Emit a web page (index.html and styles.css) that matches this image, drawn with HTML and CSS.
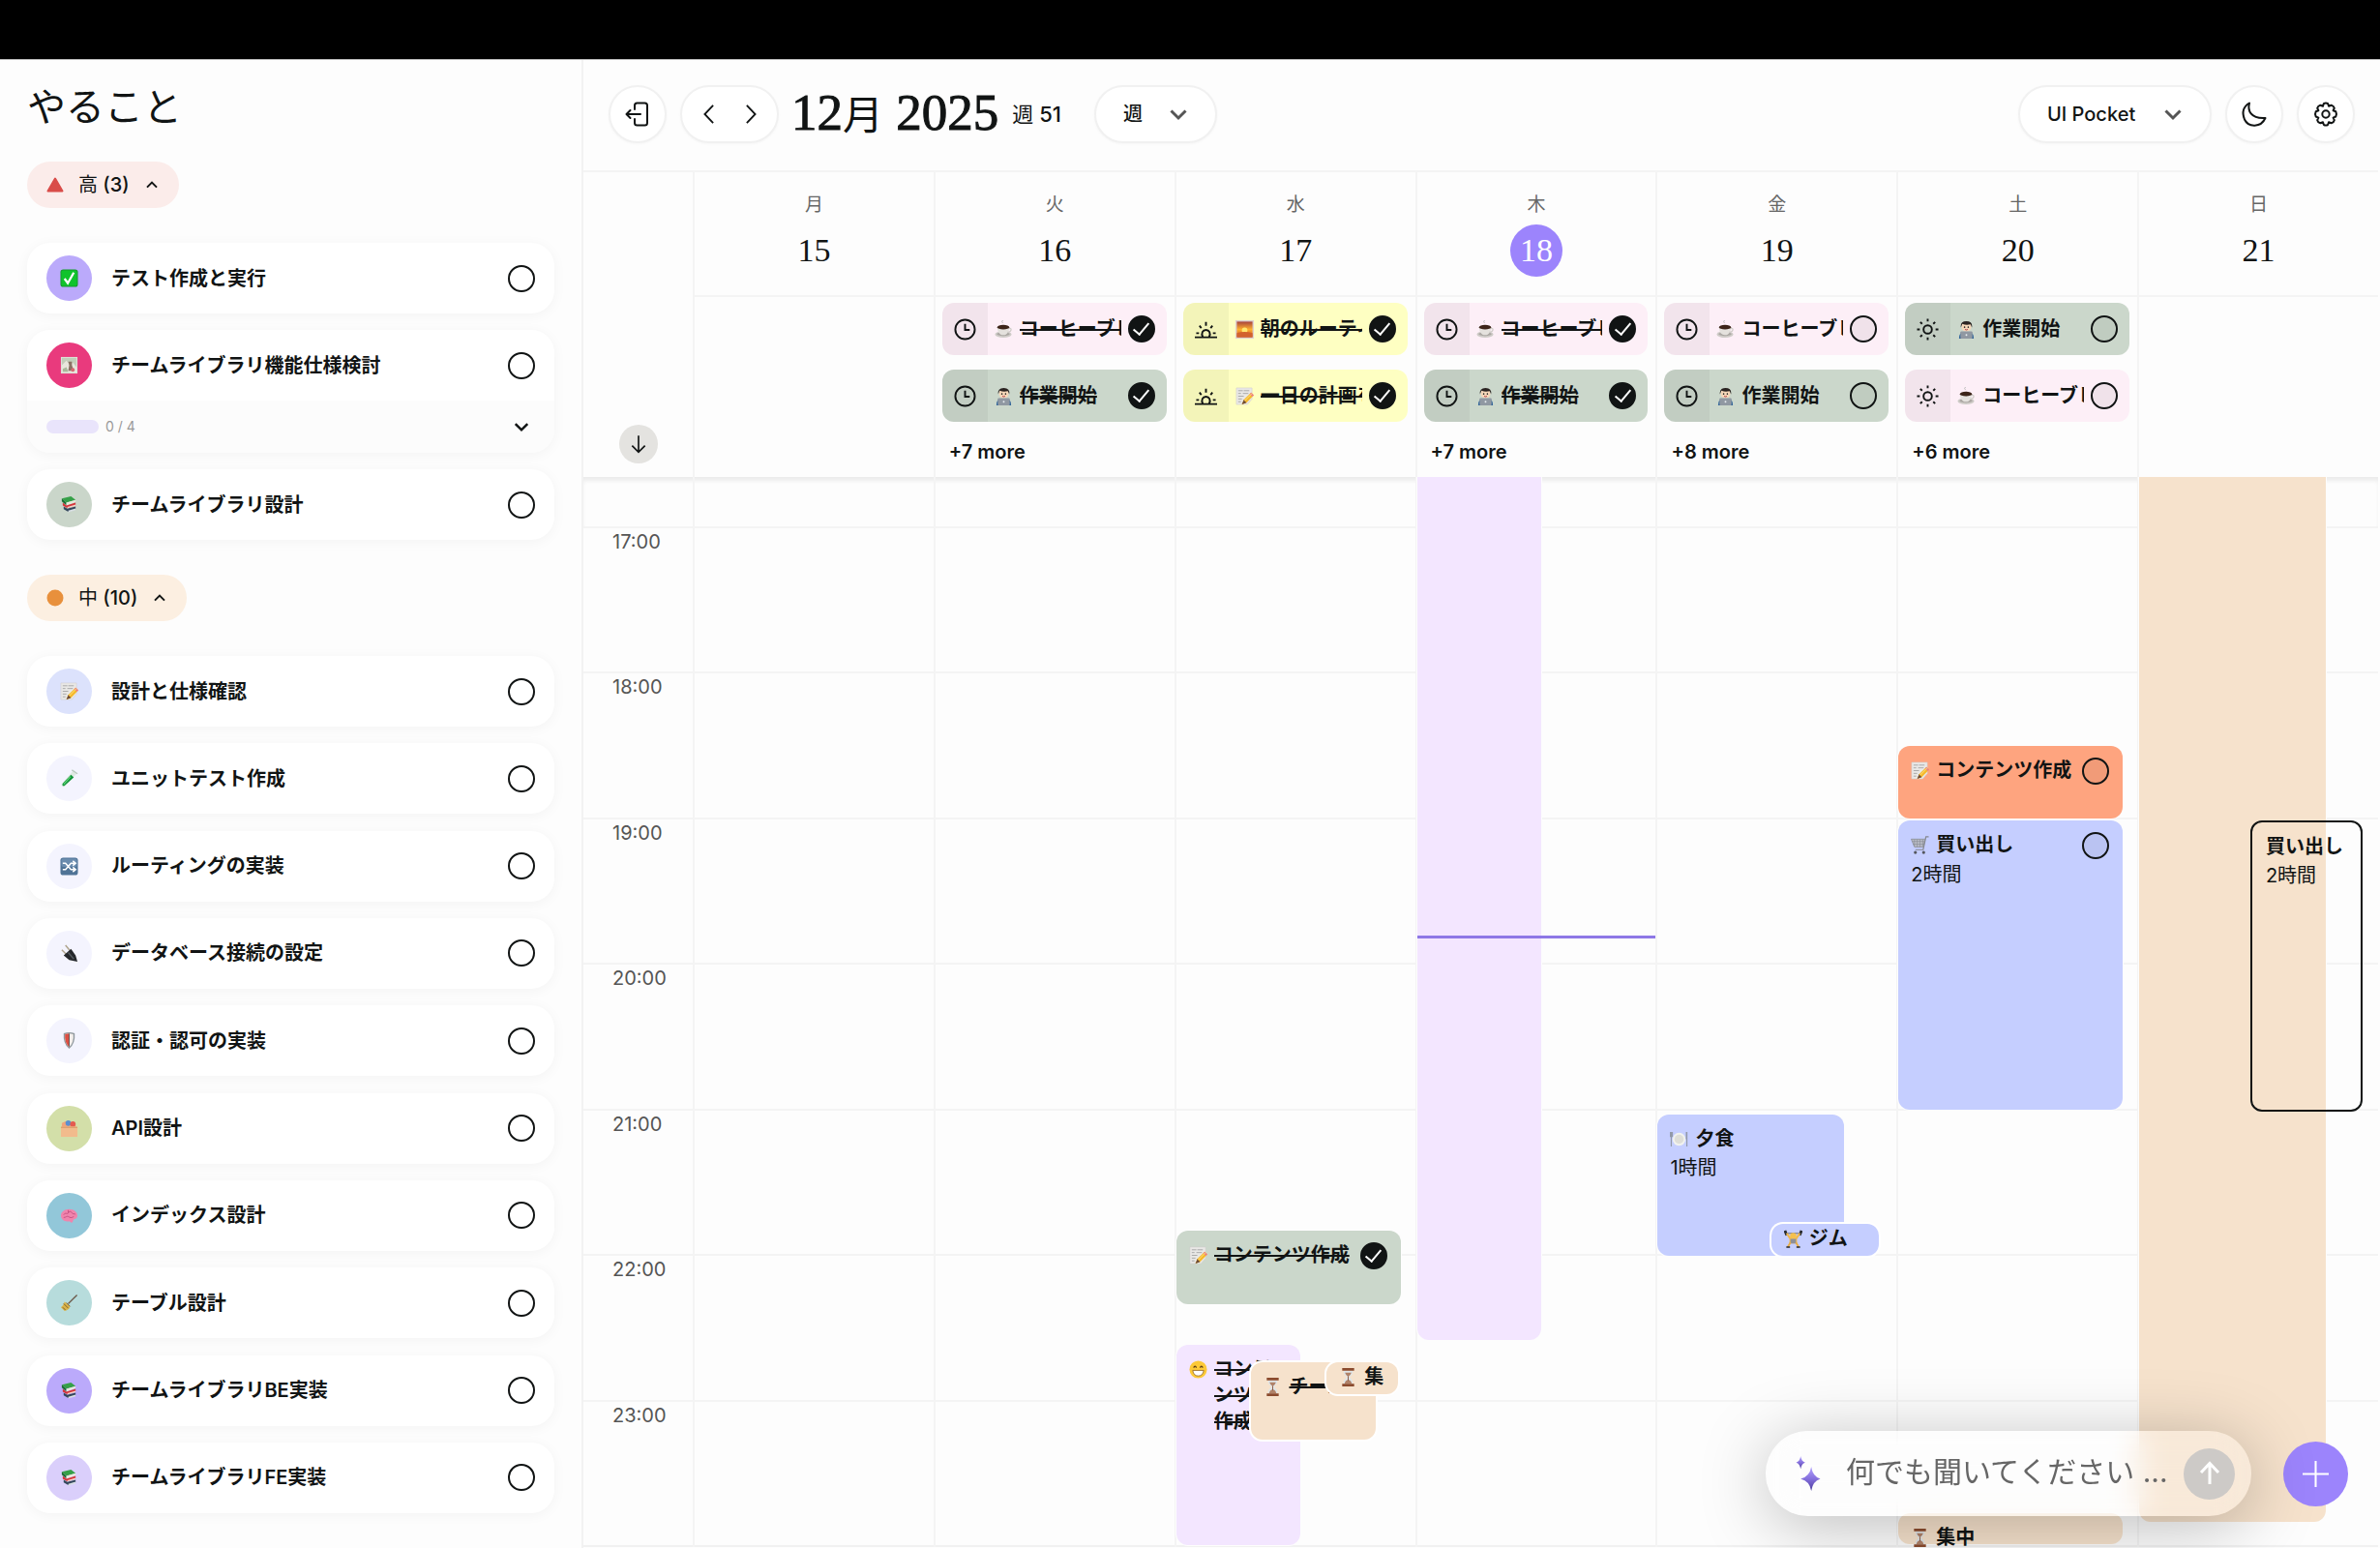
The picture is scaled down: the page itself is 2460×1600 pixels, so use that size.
FILE: index.html
```html
<!DOCTYPE html>
<html lang="ja">
<head>
<meta charset="utf-8">
<title>やること</title>
<link rel="stylesheet" href="styles.css">
</head>
<body>
<svg class="sprite" aria-hidden="true">
  <defs>
    <linearGradient id="sunset" x1="0" y1="0" x2="0" y2="1"><stop offset="0" stop-color="#a8433c"/><stop offset=".5" stop-color="#ffb02e"/><stop offset="1" stop-color="#c8502a"/></linearGradient>
    <linearGradient id="spark" x1="0" y1="0" x2="0" y2="1"><stop offset="0" stop-color="#b3a2ff"/><stop offset=".5" stop-color="#8570dd"/><stop offset="1" stop-color="#4b3b9c"/></linearGradient>
  </defs>
  <symbol id="e-check" viewBox="0 0 20 20"><rect x=".5" y=".5" width="19" height="19" rx="3" fill="#159a2b"/><rect x="1.5" y="1.5" width="17" height="17" rx="2" fill="#10c32c"/><path d="M5 10.500l3.500 5L15 4" fill="none" stroke="#fff" stroke-width="2.400"/></symbol>
  <symbol id="e-picture" viewBox="0 0 20 20"><rect x="1" y="1" width="18" height="18" fill="#dfe3d8"/><rect x="2" y="2" width="16" height="16" fill="#c3cdb9"/><path d="M2 10l5-5 4 5 3-3 4 5v6H2z" fill="#e9e6dd"/><path d="M9 6h4v4l2 6H9l1-6z" fill="#8b7264"/><circle cx="14" cy="15" r="2" fill="#d76a72"/><path d="M3 14l4-2 2 5H3z" fill="#a8b89a"/></symbol>
  <symbol id="e-books" viewBox="0 0 20 20"><path d="M2 3.500L12 1l5 4-10 3z" fill="#35a048"/><path d="M2 3.500l5 4.500v3L2 6.500z" fill="#1b6e34"/><path d="M7 8l10-3v2L7 11z" fill="#e8e9dd"/><path d="M3 8l4 3 10-3v3L8 14l-5-3z" fill="#d4343a"/><path d="M8 12.500l9-2.500v1.500L8 14z" fill="#f3d6cc"/><path d="M4 12l4 2.500 9-2.500v3L9 18l-5-3z" fill="#33475c"/><path d="M9 16.500l8-2.300V16L9 18.500z" fill="#d9dfe4"/></symbol>
  <symbol id="e-memo" viewBox="0 0 20 20"><path d="M1 1h17v12l-5 6H1z" fill="#e9e8e6" stroke="#d2d0cd" stroke-width=".6"/><path d="M3 4h5m1 0h6M3 7h3m2 0h6M3 10h6m-6 3h4m-4 3h3" stroke="#a8a8a8" stroke-width="1"/><path d="M7 19l2-5 8-8 3 3-8 8z" fill="#f5b92c"/><path d="M17 6l3 3-1.500 1.500-3-3z" fill="#ec7f8b"/><path d="M9 14l3 3-5 2z" fill="#6b4a38"/><path d="M10 15l8-8" stroke="#ffe07a" stroke-width="1"/></symbol>
  <symbol id="e-tube" viewBox="0 0 20 20"><path d="M14 2l4 3L5 19c-2 1-4-1-3-3z" fill="#dfe9e3"/><path d="M12 6l3 3L5 18c-2 1-3-1-2-2.500z" fill="#12953a"/><path d="M11.500 8L4 16.500" stroke="#65d67b" stroke-width="1.200"/><path d="M13 1l6 4" stroke="#b9c9bf" stroke-width="1.500"/></symbol>
  <symbol id="e-shuffle" viewBox="0 0 20 20"><rect x=".5" y=".5" width="19" height="19" rx="3" fill="#4f7396"/><rect x="1.500" y="1.500" width="17" height="9" rx="2" fill="#6b8cae"/><path d="M3 6.500h3l6 7h4M3 13.500h3l6-7h4M14 4l3 2.500L14 9m0 2l3 2.500-3 2.500" fill="none" stroke="#fff" stroke-width="1.600"/></symbol>
  <symbol id="e-plug" viewBox="0 0 20 20"><path d="M2 6l5 5M6 1l5 6" stroke="#b0a58e" stroke-width="1.600"/><path d="M4 12l8-7 5 7 2 7-9-2z" fill="#25282b"/><path d="M9 9l6 7" stroke="#555b60" stroke-width="1.500"/></symbol>
  <symbol id="e-shield" viewBox="0 0 20 20"><path d="M4 2q6-2 12 0 1 11-6 17Q3 13 4 2z" fill="#8f979c"/><path d="M5.500 3.200q4.500-1.500 9 0 .8 9-4.500 14Q4.700 12 5.500 3.200z" fill="#f4efec"/><path d="M5.500 3.200Q8 2.400 10 2.400v14.800Q4.700 12 5.500 3.200z" fill="#dd4f43"/><path d="M10 2.500v14" stroke="#444" stroke-width=".8"/></symbol>
  <symbol id="e-box" viewBox="0 0 20 20"><path d="M2 4l4-2 2 3h9v5H2z" fill="#f0a47a"/><circle cx="9" cy="4" r="3" fill="#5a8fd0"/><circle cx="14" cy="5" r="3" fill="#e45a50"/><path d="M1 8h18v11H1z" fill="#f2bb8c"/><path d="M1 8h18v1.500H1z" fill="#dda070"/></symbol>
  <symbol id="e-brain" viewBox="0 0 20 20"><path d="M1 10c0-4 4-7 9-7s9 3 9 7c0 3-3 4-4 4l-2 4-3-2c-5 1-9-2-9-6z" fill="#f084ad"/><path d="M4 9c2-3 4 0 5-2s3-2 4 0 3 0 4 2M4 12c3 0 3-2 5-1s3 2 6 0M9 4v3" fill="none" stroke="#c44f80" stroke-width="1"/></symbol>
  <symbol id="e-broom" viewBox="0 0 20 20"><path d="M18.500 1.500L9 11" stroke="#6d5a4b" stroke-width="1.400"/><path d="M5 9l6 5q-1 4-6 5l-4-4q3-2 4-6z" fill="#d9b44a"/><path d="M4 11l5 5M3 15l3 3M7 10l4 4" stroke="#7c5c2b" stroke-width="1"/></symbol>
  <symbol id="e-coffee" viewBox="0 0 20 20"><ellipse cx="9.500" cy="15.500" rx="9" ry="3.500" fill="#cfccc8"/><ellipse cx="9.500" cy="15" rx="7" ry="2" fill="#aaa6a2"/><path d="M3 7h13c0 5-2 9-6.500 9S3 12 3 7z" fill="#e4e1dd"/><path d="M15.500 9c4-1 3 4-1.500 4" fill="none" stroke="#cfccc8" stroke-width="1.300"/><ellipse cx="9.500" cy="7.500" rx="6.500" ry="2.500" fill="#3d2419"/><path d="M9 3q-2-1 0-3" stroke="#bbb" fill="none"/></symbol>
  <symbol id="e-tech" viewBox="0 0 20 20"><path d="M2 20q0-7 5-7h6q5 0 5 7z" fill="#32659a"/><circle cx="10" cy="7" r="5.200" fill="#f6d7b8"/><path d="M4 8q-1-7 6-7t6 7l-1.500-3.500q-5 1-9-.5z" fill="#2b2422"/><circle cx="8" cy="7.500" r=".8" fill="#222"/><circle cx="12" cy="7.500" r=".8" fill="#222"/><path d="M8.500 10q1.500 1 3 0" stroke="#a34" fill="none"/><rect x="3.500" y="12" width="13" height="8" rx="1" fill="#9098a2"/><circle cx="10" cy="16" r="1" fill="#e8ecf0"/></symbol>
  <symbol id="e-sunrise" viewBox="0 0 20 20"><rect width="20" height="20" fill="#ddd1d0"/><rect x="1.500" y="1.500" width="17" height="17" fill="url(#sunset)"/><circle cx="10" cy="11" r="3" fill="#ffe66e"/><path d="M1.500 14q8-3 17 0v4.500h-17z" fill="#d2622d"/></symbol>
  <symbol id="e-hourglass" viewBox="0 0 20 20"><path d="M5 3h10q0 5-4 7 4 2 4 7H5q0-5 4-7-4-2-4-7z" fill="#dfe4e6"/><path d="M6.500 5h7q-1 3-3.500 4.500Q7.500 8 6.500 5zM6 17q1-4 4-4t4 4z" fill="#b08268"/><path d="M3.500 0h13v3h-13zM3.500 17h13v3h-13z" fill="#8b4b2e"/><path d="M10 9v5" stroke="#8b5b45"/></symbol>
  <symbol id="e-grin" viewBox="0 0 20 20"><circle cx="10" cy="10" r="9.500" fill="#fcc938"/><path d="M5 8q1.500-3 3 0M12 8q1.500-3 3 0" stroke="#593a16" stroke-width="1.300" fill="none"/><path d="M4 11h12q-1 6-6 6t-6-6z" fill="#fff" stroke="#8a5a1c" stroke-width=".8"/></symbol>
  <symbol id="e-plate" viewBox="0 0 20 20"><circle cx="10" cy="10" r="7" fill="#f1f2ee"/><circle cx="10" cy="10" r="5" fill="#deded8"/><path d="M1.500 2v16M.5 2v5h2.200V2M18.500 2v16M18 2v8" stroke="#9299a8" stroke-width="1.200" fill="none"/></symbol>
  <symbol id="e-lift" viewBox="0 0 20 20"><path d="M1 1l2 5M19 1l-2 5" stroke="#26292d" stroke-width="3"/><path d="M2 4h16" stroke="#666" stroke-width="1"/><path d="M3 4l4 6v4h6v-4l4-6" fill="none" stroke="#f2b84a" stroke-width="2.200"/><circle cx="10" cy="7" r="3.500" fill="#f5c04e"/><path d="M7 10h6v5H7z" fill="#8d8f99"/><path d="M7 14l-3 5M13 14l3 5" stroke="#e9ad45" stroke-width="2"/><path d="M2.500 19h4M13.500 19h4" stroke="#26292d" stroke-width="1.500"/></symbol>
  <symbol id="e-cart" viewBox="0 0 20 20"><path d="M19.500 1h-3l-3 14H5" fill="none" stroke="#85888f" stroke-width="1.300"/><path d="M.5 3.500h15L13.500 12H4z" fill="#b9bcc6" stroke="#85888f" stroke-width=".8"/><path d="M4 4v7m3-7v8m3-8v8m3-8v7M1.500 6h13M2.500 9h12" stroke="#858891" stroke-width=".6"/><circle cx="5" cy="18" r="1.700" fill="#54575d"/><circle cx="14" cy="18" r="1.700" fill="#54575d"/></symbol>
  <symbol id="i-clock" viewBox="0 0 24 24"><circle cx="12" cy="12" r="10.500"/><path d="M12 6v6.500h5"/></symbol>
  <symbol id="i-sun" viewBox="0 0 24 24"><circle cx="12" cy="12" r="4.500"/><path d="M12 .5v3M12 20.500v3M.5 12h3M20.500 12h3M4 4l2 2M18 18l2 2M4 20l2-2M18 6l2-2"/></symbol>
  <symbol id="i-dawn" viewBox="0 0 24 24"><path d="M0 20.500h24M1.500 16h3M19.500 16h3M12 4v4M5 8l2 2.500M19 8l-2 2.500M8.500 20c-2-4 0-7.500 3.500-7.500s5.500 3.500 3.500 7.500"/></symbol>
  <symbol id="i-down" viewBox="0 0 24 24"><path d="M4.500 8.500L12 16l7.500-7.500"/></symbol>
  <symbol id="i-up" viewBox="0 0 24 24"><path d="M4.500 16L12 8.500l7.500 7.500"/></symbol>
</svg>

<div class="topbar"></div>
<div class="app">
  <aside class="sidebar">
    <h1>やること</h1>
    <section class="group">
      <button class="pill pill-high" type="button"><svg class="mark" viewBox="0 0 18 18"><path d="M9 2.500L16.500 15.500h-15z" fill="#d94c49" stroke="#d94c49" stroke-width="2" stroke-linejoin="round"/></svg><span><span class="thin">高</span> (3)</span><svg class="caret"><use href="#i-up"/></svg></button>
      <div class="cards">
        <label class="card"><span class="dot bg-violet"><svg><use href="#e-check"/></svg></span><span class="name">テスト作成と実行</span><input type="checkbox"></label>
        <div class="stack">
          <label class="card"><span class="dot bg-pink"><svg><use href="#e-picture"/></svg></span><span class="name">チームライブラリ機能仕様検討</span><input type="checkbox"></label>
          <div class="sub"><span class="bar"></span><span class="count">0 / 4</span><button type="button" aria-label="開く"><svg><use href="#i-down"/></svg></button></div>
        </div>
        <label class="card"><span class="dot bg-sage"><svg><use href="#e-books"/></svg></span><span class="name">チームライブラリ設計</span><input type="checkbox"></label>
      </div>
    </section>
    <section class="group group-fill">
      <button class="pill pill-mid" type="button"><svg class="mark" viewBox="0 0 18 18"><circle cx="9" cy="9" r="8.500" fill="#e8903c"/></svg><span><span class="thin">中</span> (10)</span><svg class="caret"><use href="#i-up"/></svg></button>
      <div class="cards">
        <label class="card"><span class="dot bg-sky"><svg><use href="#e-memo"/></svg></span><span class="name">設計と仕様確認</span><input type="checkbox"></label>
        <label class="card"><span class="dot bg-mist"><svg><use href="#e-tube"/></svg></span><span class="name">ユニットテスト作成</span><input type="checkbox"></label>
        <label class="card"><span class="dot bg-mist"><svg><use href="#e-shuffle"/></svg></span><span class="name">ルーティングの実装</span><input type="checkbox"></label>
        <label class="card"><span class="dot bg-mist"><svg><use href="#e-plug"/></svg></span><span class="name">データベース接続の設定</span><input type="checkbox"></label>
        <label class="card"><span class="dot bg-mist"><svg><use href="#e-shield"/></svg></span><span class="name">認証・認可の実装</span><input type="checkbox"></label>
        <label class="card"><span class="dot bg-olive"><svg><use href="#e-box"/></svg></span><span class="name">API設計</span><input type="checkbox"></label>
        <label class="card"><span class="dot bg-blue"><svg><use href="#e-brain"/></svg></span><span class="name">インデックス設計</span><input type="checkbox"></label>
        <label class="card"><span class="dot bg-teal"><svg><use href="#e-broom"/></svg></span><span class="name">テーブル設計</span><input type="checkbox"></label>
        <label class="card"><span class="dot bg-violet"><svg><use href="#e-books"/></svg></span><span class="name">チームライブラリBE実装</span><input type="checkbox"></label>
        <label class="card"><span class="dot bg-lilac"><svg><use href="#e-books"/></svg></span><span class="name">チームライブラリFE実装</span><input type="checkbox"></label>
      </div>
    </section>
  </aside>

  <main class="main">
    <header class="toolbar">
      <button class="round" type="button" aria-label="サイドバーを閉じる"><svg viewBox="0 0 26 26"><path d="M10 8V4q0-2.500 2.500-2.500h8Q23 1.500 23 4v18q0 2.500-2.500 2.500h-8Q10 24.500 10 22v-4M16 13H2M5.500 9L1.500 13l4 4"/></svg></button>
      <div class="nav"><button type="button" aria-label="前の週"><svg viewBox="0 0 24 24"><path d="M16.500 2L7 12l9.500 10"/></svg></button><button type="button" aria-label="次の週"><svg viewBox="0 0 24 24"><path d="M7.500 2L17 12 7.500 22"/></svg></button></div>
      <h2>12<span class="kanji">月</span> 2025</h2>
      <span class="week"><span class="thin">週</span> 51</span>
      <span class="picker picker-view"><select aria-label="表示"><option>週</option></select><svg><use href="#i-down"/></svg></span>
      <span class="picker picker-user"><select aria-label="アカウント"><option>UI Pocket</option></select><svg><use href="#i-down"/></svg></span>
      <button class="round" type="button" aria-label="ダークモード"><svg viewBox="0 0 26 26"><path d="M8 1.500C6 9 9 18 24.500 17 20 27 7 27 3 18.500 0 11 2 5 8 1.500z"/></svg></button>
      <button class="round" type="button" aria-label="設定"><svg viewBox="0 0 26 26"><circle cx="13" cy="13" r="3.700"/><path d="M10.800 2.200q2.200-1.400 4.400 0l.8 2.600 2.700-1.100q2.500.7 3.100 3.100l-1.200 2.500 2.700 1q1.300 2.700 0 5.200l-2.700 1.100 1.200 2.600q-.6 2.500-3.100 3.100L16 21.200l-.8 2.600q-2.200 1.400-4.400 0l-.8-2.600-2.700 1.100q-2.500-.6-3.100-3.100l1.200-2.600-2.700-1.100q-1.300-2.500 0-5.200l2.700-1-1.200-2.500q.6-2.400 3.100-3.100L10 4.800z"/></svg></button>
    </header>

    <div class="heads">
      <div class="gutter"><button class="expand" type="button" aria-label="すべて表示"><svg viewBox="0 0 24 24"><path d="M12 1.500v20M4 14l8 8 8-8"/></svg></button></div>
      <div class="head"><span class="dow">月</span><span class="num">15</span></div>
      <div class="head"><span class="dow">火</span><span class="num">16</span></div>
      <div class="head"><span class="dow">水</span><span class="num">17</span></div>
      <div class="head"><span class="dow">木</span><span class="num today">18</span></div>
      <div class="head"><span class="dow">金</span><span class="num">19</span></div>
      <div class="head"><span class="dow">土</span><span class="num">20</span></div>
      <div class="head"><span class="dow">日</span><span class="num">21</span></div>

      <div class="allday"></div>
      <div class="allday">
        <label class="chip c-rose done"><span class="when"><svg><use href="#i-clock"/></svg></span><svg class="emoji"><use href="#e-coffee"/></svg><span class="text">コーヒーブレイク</span><input type="checkbox" checked></label>
        <label class="chip c-sage done"><span class="when"><svg><use href="#i-clock"/></svg></span><svg class="emoji"><use href="#e-tech"/></svg><span class="text">作業開始</span><input type="checkbox" checked></label>
        <a class="more" href="#">+7 more</a>
      </div>
      <div class="allday">
        <label class="chip c-lemon done"><span class="when"><svg><use href="#i-dawn"/></svg></span><svg class="emoji"><use href="#e-sunrise"/></svg><span class="text">朝のルーティン</span><input type="checkbox" checked></label>
        <label class="chip c-lemon done"><span class="when"><svg><use href="#i-dawn"/></svg></span><svg class="emoji"><use href="#e-memo"/></svg><span class="text">一日の計画を立てる</span><input type="checkbox" checked></label>
      </div>
      <div class="allday">
        <label class="chip c-rose done"><span class="when"><svg><use href="#i-clock"/></svg></span><svg class="emoji"><use href="#e-coffee"/></svg><span class="text">コーヒーブレイク</span><input type="checkbox" checked></label>
        <label class="chip c-sage done"><span class="when"><svg><use href="#i-clock"/></svg></span><svg class="emoji"><use href="#e-tech"/></svg><span class="text">作業開始</span><input type="checkbox" checked></label>
        <a class="more" href="#">+7 more</a>
      </div>
      <div class="allday">
        <label class="chip c-rose"><span class="when"><svg><use href="#i-clock"/></svg></span><svg class="emoji"><use href="#e-coffee"/></svg><span class="text">コーヒーブレイク</span><input type="checkbox"></label>
        <label class="chip c-sage"><span class="when"><svg><use href="#i-clock"/></svg></span><svg class="emoji"><use href="#e-tech"/></svg><span class="text">作業開始</span><input type="checkbox"></label>
        <a class="more" href="#">+8 more</a>
      </div>
      <div class="allday">
        <label class="chip c-sage"><span class="when"><svg><use href="#i-sun"/></svg></span><svg class="emoji"><use href="#e-tech"/></svg><span class="text">作業開始</span><input type="checkbox"></label>
        <label class="chip c-rose"><span class="when"><svg><use href="#i-sun"/></svg></span><svg class="emoji"><use href="#e-coffee"/></svg><span class="text">コーヒーブレイク</span><input type="checkbox"></label>
        <a class="more" href="#">+6 more</a>
      </div>
      <div class="allday"></div>
    </div>

    <div class="board">
      <div class="hours">
        <div></div><div>17:00</div><div>18:00</div><div>19:00</div><div>20:00</div><div>21:00</div><div>22:00</div><div>23:00</div>
      </div>
      <div class="days">
        <div class="day"></div>
        <div class="day"></div>
        <div class="day">
          <label class="event wide c-sage done" style="--start:4.83;--hours:.5"><svg class="emoji"><use href="#e-memo"/></svg><span class="text">コンテンツ作成</span><input type="checkbox" checked></label>
          <div class="event half c-purple done" style="--start:5.61;--hours:1.38"><svg class="emoji"><use href="#e-grin"/></svg><span class="text">コンテ<br>ンツ<br>作成</span></div>
          <div class="event half c-sand done raised" style="--start:5.73;--hours:.53;--left:31.5%"><svg class="emoji"><use href="#e-hourglass"/></svg><span class="text">チーム</span></div>
          <div class="event third c-sand raised short" style="--start:5.73;--hours:.22;--left:63%"><svg class="emoji"><use href="#e-hourglass"/></svg><span class="text">集</span></div>
        </div>
        <div class="day">
          <div class="event half c-purple from-above" style="--start:0;--hours:5.58"></div>
          <div class="now" style="--start:2.8"></div>
        </div>
        <div class="day">
          <div class="event most c-indigo" style="--start:4.03;--hours:.97"><svg class="emoji"><use href="#e-plate"/></svg><span class="text">夕食</span><span class="span">1時間</span></div>
          <div class="event part c-indigo raised short" style="--start:4.78;--hours:.22;--left:47.5%"><svg class="emoji"><use href="#e-lift"/></svg><span class="text">ジム</span></div>
        </div>
        <div class="day">
          <label class="event wide c-coral" style="--start:1.5;--hours:.5"><svg class="emoji"><use href="#e-memo"/></svg><span class="text">コンテンツ作成</span><input type="checkbox"></label>
          <label class="event wide c-indigo" style="--start:2.01;--hours:1.99"><svg class="emoji"><use href="#e-cart"/></svg><span class="text">買い出し</span><input type="checkbox"><span class="span">2時間</span></label>
          <div class="event wide c-sand" style="--start:6.77;--hours:.21"><svg class="emoji"><use href="#e-hourglass"/></svg><span class="text">集中</span></div>
        </div>
        <div class="day">
          <div class="event most c-sand from-above" style="--start:0;--hours:6.83"></div>
          <div class="event part ghost" style="--start:2.01;--hours:2;--left:46.5%"><span class="text">買い出し</span><span class="span">2時間</span></div>
        </div>
      </div>
    </div>
  </main>
</div>

<div class="dock">
  <form class="ask">
    <svg class="stars" viewBox="0 0 32 46"><path d="M20 14q2 13 12 16-10 3-12 16Q18 33 6 30q12-3 14-16z" fill="url(#spark)"/><path d="M6 0q1 7 6 8.500Q7 10 6 17 5 10 0 8.500 5 7 6 0z" fill="url(#spark)"/></svg>
    <input type="text" aria-label="質問" placeholder="何でも聞いてください ...">
    <button class="send" type="button" aria-label="送信"><svg viewBox="0 0 24 24"><path d="M12 23V2M3 11l9-9.500L21 11"/></svg></button>
  </form>
  <button class="add" type="button" aria-label="追加"><svg viewBox="0 0 26 26"><path d="M13 0v26M0 13h26"/></svg></button>
</div>
</body>
</html>
```
FILE: styles.css
```css
* { box-sizing: border-box; }
body {
  margin: 0;
  height: 100vh;
  display: flex;
  flex-direction: column;
  overflow: hidden;
  background: #fdfdfd;
  color: #111414;
  font-family: "Inter", "Noto Sans CJK JP", sans-serif;
  font-size: 20px;
  line-height: 28px;
}
button, input, select { font: inherit; color: inherit; margin: 0; }
button { padding: 0; border: 0; background: none; display: flex; align-items: center; justify-content: center; }
h1, h2 { margin: 0; font-weight: 400; }
a { color: inherit; text-decoration: none; }
svg { flex: none; fill: none; stroke: none; overflow: visible; }
.sprite { position: absolute; width: 0; height: 0; }
.thin { font-weight: 400; }

input[type="checkbox"] {
  appearance: none;
  flex: none;
  width: 28px;
  height: 28px;
  border: 2px solid #111414;
  border-radius: 50%;
  background: rgba(0, 0, 0, .05);
  display: flex;
  justify-content: center;
  align-items: center;
}
input[type="checkbox"]:checked { background: #111414; }
input[type="checkbox"]:checked::before {
  content: "";
  width: 7px;
  height: 14px;
  margin-bottom: 4px;
  border: solid #fff;
  border-width: 0 2px 2px 0;
  transform: rotate(40deg);
}

.topbar { flex: none; height: 62px; background: #000; border-bottom: 1px solid #bbb; }
.app { flex: 1; min-height: 0; display: flex; }

/* Sidebar */
.sidebar { flex: none; display: flex; flex-direction: column; width: 603px; padding: 20px 28px 36px 28px; border-right: 2px solid #f2f2f2; }
h1 { font-size: 40px; line-height: 58px; }
.group { margin-top: 27px; }
.group + .group { margin-top: 36px; }
.pill { height: 48px; padding: 0 20px; gap: 15px; border-radius: 24px; font-weight: 500; }
.pill-high { background: #fbecea; }
.pill-mid { background: #fcefe1; }
.mark { width: 18px; height: 18px; }
.caret { width: 16px; height: 16px; stroke: #111414; stroke-width: 3; }
.cards { display: flex; flex-direction: column; gap: 17px; margin-top: 36px; }
.group-fill { flex: 1; display: flex; flex-direction: column; align-items: flex-start; }
.group-fill .cards { flex: 1; align-self: stretch; justify-content: space-between; }
.card { display: flex; align-items: center; height: 73px; padding: 0 20px; border-radius: 24px; background: #fff; }
.cards > * { border-radius: 24px; box-shadow: 0 2px 14px rgba(0, 0, 0, .045); }
.card input { background: #fff; }
.dot { width: 47px; height: 47px; margin-right: 20px; border-radius: 50%; display: flex; align-items: center; justify-content: center; }
.dot svg { width: 19px; height: 19px; }
.name { flex: 1; font-weight: 600; }
.sub { display: flex; align-items: center; height: 54px; padding: 0 20px; background: #fcfcfc; border-radius: 0 0 24px 24px; }
.stack .card { border-radius: 24px 24px 0 0; }
.bar { width: 54px; height: 14px; border-radius: 7px; background: #e9e4fb; }
.count { flex: 1; margin-left: 7px; font-size: 14px; color: #999; }
.sub button { width: 28px; height: 28px; }
.sub svg { width: 20px; height: 20px; stroke: #111414; stroke-width: 3; }
.bg-violet { background: #bbaafb; }
.bg-pink { background: #e93a7d; }
.bg-sage { background: #cad6ca; }
.bg-sky { background: #dce2fc; }
.bg-mist { background: #f4f4fe; }
.bg-olive { background: #d3dfa9; }
.bg-blue { background: #92c7d9; }
.bg-teal { background: #b7dcdc; }
.bg-lilac { background: #dacffb; }

/* Toolbar */
.main { flex: 1; min-width: 0; display: flex; flex-direction: column; padding-right: 2px; }
.toolbar { flex: none; display: flex; align-items: center; height: 114px; padding: 0 24px 2px 26px; }
.round, .nav, .picker { height: 60px; border: 2px solid #f1f1f1; border-radius: 30px; background: #fff; box-shadow: 0 1px 3px rgba(0, 0, 0, .03); }
.round { width: 60px; margin-right: 14px; }
.round:last-child { margin-right: 0; }
.round svg { width: 26px; height: 26px; stroke: #111414; stroke-width: 2; stroke-linejoin: round; stroke-linecap: round; }
.nav { display: flex; width: 102px; padding: 0 6px; margin-right: 13px; }
.nav button { flex: 1; }
.nav svg { width: 22px; height: 22px; stroke: #111414; stroke-width: 2; }
h2 { font-family: "Liberation Serif", "Noto Sans CJK JP", serif; font-size: 53px; line-height: 60px; white-space: nowrap; -webkit-text-stroke: 1px #111414; }
.kanji { font-size: 42px; -webkit-text-stroke: 0; }
.week { margin: 0 34px 0 14px; font-size: 22px; font-weight: 500; white-space: nowrap; }
.picker { display: flex; align-items: center; position: relative; }
.picker select { appearance: none; width: 100%; height: 100%; padding: 0 28px; border: 0; background: none; font-weight: 500; }
.picker svg { position: absolute; right: 26px; width: 24px; height: 24px; stroke: #555; stroke-width: 3; pointer-events: none; }
.picker-view { width: 127px; }
.picker-user { width: 200px; margin: 0 14px 0 auto; }

/* Day headers and all-day rows */
.heads { flex: none; display: grid; grid-template-columns: 113px repeat(7, 1fr); grid-template-rows: 129px 186px; border-top: 2px solid #f4f4f4; }
.gutter { grid-row: span 2; display: flex; flex-direction: column; align-items: center; justify-content: flex-end; padding-bottom: 14px; }
.expand { width: 40px; height: 40px; border-radius: 50%; background: #e4e3e0; }
.expand svg { width: 20px; height: 20px; stroke: #111414; stroke-width: 2; }
.head, .allday { min-width: 0; border-left: 2px solid #f4f4f4; border-bottom: 2px solid #f4f4f4; }
.allday { border-bottom: 0; }
.head { display: flex; flex-direction: column; align-items: center; padding-top: 20px; }
.dow { font-size: 19px; color: #666; }
.num { display: flex; align-items: center; justify-content: center; width: 54px; height: 54px; margin-top: 6px; border-radius: 50%; font-family: "Liberation Serif", serif; font-size: 34px; }
.today { background: #9c84fc; color: #fff; }
.allday { padding: 6px 8px 0 7px; display: flex; flex-direction: column; }
.chip { display: flex; align-items: center; height: 54px; margin-bottom: 15px; padding-right: 12px; border-radius: 12px; overflow: hidden; }
.when { flex: none; width: 47px; height: 54px; margin-right: 7px; display: flex; align-items: center; justify-content: center; background: rgba(0, 0, 0, .045); }
.when svg { width: 23px; height: 23px; stroke: #111414; stroke-width: 2; }
.emoji { width: 19px; height: 19px; margin-right: 7px; }
.text { font-weight: 600; white-space: nowrap; overflow: hidden; }
.chip .text { flex: 1; margin-right: 7px; }
.done .text { text-decoration: line-through 2px; }
.more { margin: 2px 0 0 7px; font-weight: 600; }

.c-rose { background: #fdeff7; }
.c-sage { background: #cbd7cb; }
.c-lemon { background: #feffc2; }
.c-purple { background: #f3e6ff; }
.c-sand { background: #f6e2cc; }
.c-indigo { background: #c5ceff; }
.c-coral { background: #fea47f; }

/* Hour grid: 52px of the 16:00 row, then seven whole hours */
.board { flex: 1; min-height: 0; position: relative; margin-bottom: 1px; padding-left: 113px; overflow: hidden; }
.hours { position: absolute; inset: 0; display: grid; grid-template-rows: 51px repeat(7, 1fr); border-bottom: 2px solid #f1f1f1; }
.hours div { border-top: 2px solid #f4f4f4; padding-left: 30px; color: #555; }
.hours div:first-child { border-top: 0; box-shadow: inset 0 5px 4px -1px rgba(0, 0, 0, .07); }
.days { height: 100%; display: grid; grid-template-columns: repeat(7, 1fr); }
.day { position: relative; border-left: 2px solid #f4f4f4; }
.event {
  position: absolute;
  left: var(--left, 0);
  top: calc(52px + (100% - 52px) / 7 * var(--start));
  height: calc((100% - 52px) / 7 * var(--hours));
  display: grid;
  grid-template-columns: auto 1fr auto;
  align-content: start;
  padding: 12px 14px 0 13px;
  border-radius: 12px;
  box-shadow: 0 0 0 1px #fdfdfd;
}
.event .emoji { margin-top: 4px; }
.event .text { line-height: 27px; }
.span { grid-column: 1 / -1; font-weight: 400; line-height: 32px; }
.wide { width: 94%; }
.most { width: 78%; }
.half { width: 52%; }
.part { width: 45%; }
.third { width: 30%; }
.raised { box-shadow: 0 0 0 2px #fff; }
.short { padding-top: 2px; }
.from-above { top: 0; height: calc(52px + (100% - 52px) / 7 * var(--hours)); border-radius: 0 0 12px 12px; }
.ghost { display: block; width: 47%; padding: 12px 14px; border: 2px solid #111414; box-shadow: none; }
.ghost .text, .ghost .span { display: block; }
.now { position: absolute; left: 0; right: 0; top: calc(52px + (100% - 52px) / 7 * var(--start)); height: 3px; background: #8e78e6; }

/* Floating controls over the calendar */
.dock { position: fixed; right: 33px; bottom: 33px; display: flex; align-items: center; gap: 33px; }
.ask { display: flex; align-items: center; width: 502px; height: 88px; padding: 0 17px 0 30px; border-radius: 44px; background: rgba(255, 255, 255, .25); backdrop-filter: blur(16px); box-shadow: 0 10px 70px rgba(0, 0, 0, .26); }
.stars { width: 28px; height: 36px; }
.ask input { flex: 1; min-width: 0; height: 44px; margin: 0 0 4px 25px; padding: 0; border: 0; background: none; font-size: 30px; }
.ask input::placeholder { color: #666; opacity: 1; }
.send { width: 53px; height: 53px; border-radius: 50%; background: #cdcac7; }
.send svg { width: 24px; height: 24px; stroke: #fff; stroke-width: 3; }
.add { width: 67px; height: 67px; border-radius: 50%; background: #9c84fc; }
.add svg { width: 27px; height: 27px; stroke: #fff; stroke-width: 2; }
```
